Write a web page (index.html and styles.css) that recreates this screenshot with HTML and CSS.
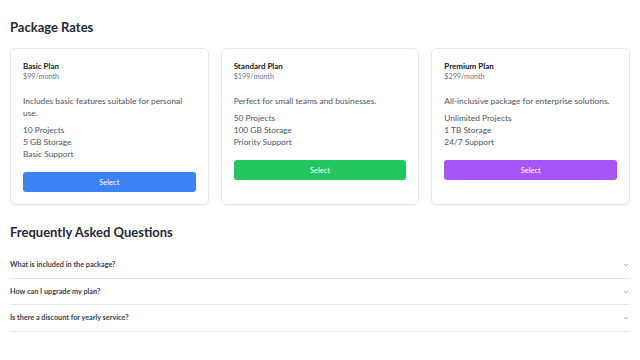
FILE: index.html
```html
<!DOCTYPE html>
<html>
<head>
    <meta charset="utf-8">
    <title>Package Rates</title>
    <link rel="stylesheet" href="styles.css">
</head>
<body>
<main class="page">

    <!-- plans -->
    <section class="rates">
        <h2 class="section-title">Package Rates</h2>
        <div class="plans">
            <div class="plan">
                <h3 class="plan-name">Basic Plan</h3>
                <p class="plan-price">$99/month</p>
                <p class="plan-desc">Includes basic features suitable for personal use.</p>
                <ul class="plan-features">
                    <li>10 Projects</li>
                    <li>5 GB Storage</li>
                    <li>Basic Support</li>
                </ul>
                <button class="btn btn-blue">Select</button>
            </div>
            <div class="plan">
                <h3 class="plan-name">Standard Plan</h3>
                <p class="plan-price">$199/month</p>
                <p class="plan-desc">Perfect for small teams and businesses.</p>
                <ul class="plan-features">
                    <li>50 Projects</li>
                    <li>100 GB Storage</li>
                    <li>Priority Support</li>
                </ul>
                <button class="btn btn-green">Select</button>
            </div>
            <div class="plan">
                <h3 class="plan-name">Premium Plan</h3>
                <p class="plan-price">$299/month</p>
                <p class="plan-desc">All-inclusive package for enterprise solutions.</p>
                <ul class="plan-features">
                    <li>Unlimited Projects</li>
                    <li>1 TB Storage</li>
                    <li>24/7 Support</li>
                </ul>
                <button class="btn btn-purple">Select</button>
            </div>
        </div>
    </section>

    <!-- faq -->
    <section class="faq">
        <h2 class="section-title">Frequently Asked Questions</h2>
        <div class="faq-list">
            <div class="faq-item">
                <span>What is included in the package?</span>
                <svg class="chevron" viewBox="0 0 8 8"><path d="M2 3l2 2 2-2"/></svg>
            </div>
            <div class="faq-item">
                <span>How can I upgrade my plan?</span>
                <svg class="chevron" viewBox="0 0 8 8"><path d="M2 3l2 2 2-2"/></svg>
            </div>
            <div class="faq-item">
                <span>Is there a discount for yearly service?</span>
                <svg class="chevron" viewBox="0 0 8 8"><path d="M2 3l2 2 2-2"/></svg>
            </div>
        </div>
    </section>

</main>
</body>
</html>
```

FILE: styles.css
```css
body
{
    margin: 0;
    padding: 10px;
    background: #fff;
    font-family: Lato, "Noto Sans", sans-serif;
    color: #1f2937;
}

.section-title
{
    font-size: 13px;
    font-weight: 700;
    line-height: 20px;
    margin: 7px 0 11px;
    color: #1f2937;
}

.plans
{
    display: grid;
    grid-template-columns: repeat(3, 1fr);
    gap: 12px;
}

.plan
{
    border: 1px solid #e5e7eb;
    border-radius: 6px;
    padding: 12px;
    box-shadow: 0 1px 2px rgba(0, 0, 0, 0.05);
}

.plan-name
{
    margin: 0;
    font-size: 8px;
    line-height: 10px;
    font-weight: 700;
    color: #111827;
}

.plan-price
{
    margin: 1px 0 0;
    font-size: 7.2px;
    line-height: 10px;
    color: #6b7280;
}

.plan-desc
{
    margin: 13px 0 0;
    font-size: 8.35px;
    line-height: 12px;
    color: #4b5563;
}

.plan-features
{
    list-style: none;
    margin: 5px 0 0;
    padding: 0;
    font-size: 8.35px;
    line-height: 12px;
    color: #4b5563;
}

.btn
{
    display: block;
    width: 100%;
    height: 20px;
    margin-top: 12px;
    border: 0;
    border-radius: 3px;
    font-family: inherit;
    font-size: 7.5px;
    color: #fff;
}

.btn-blue { background: #3b82f6; }
.btn-green { background: #22c55e; }
.btn-purple { background: #a855f7; }

.faq
{
    margin-top: 17px;
}

.faq .section-title
{
    margin: 0 0 10px;
}

.faq-item
{
    display: flex;
    justify-content: space-between;
    align-items: center;
    padding: 9px 0 8px;
    line-height: 8.5px;
    font-size: 7.25px;
    font-weight: 700;
    color: #374151;
    border-bottom: 1px solid #e5e7eb;
}

.chevron
{
    width: 8px;
    height: 8px;
    fill: none;
    stroke: #9ca3af;
    stroke-width: 0.8;
}
```
